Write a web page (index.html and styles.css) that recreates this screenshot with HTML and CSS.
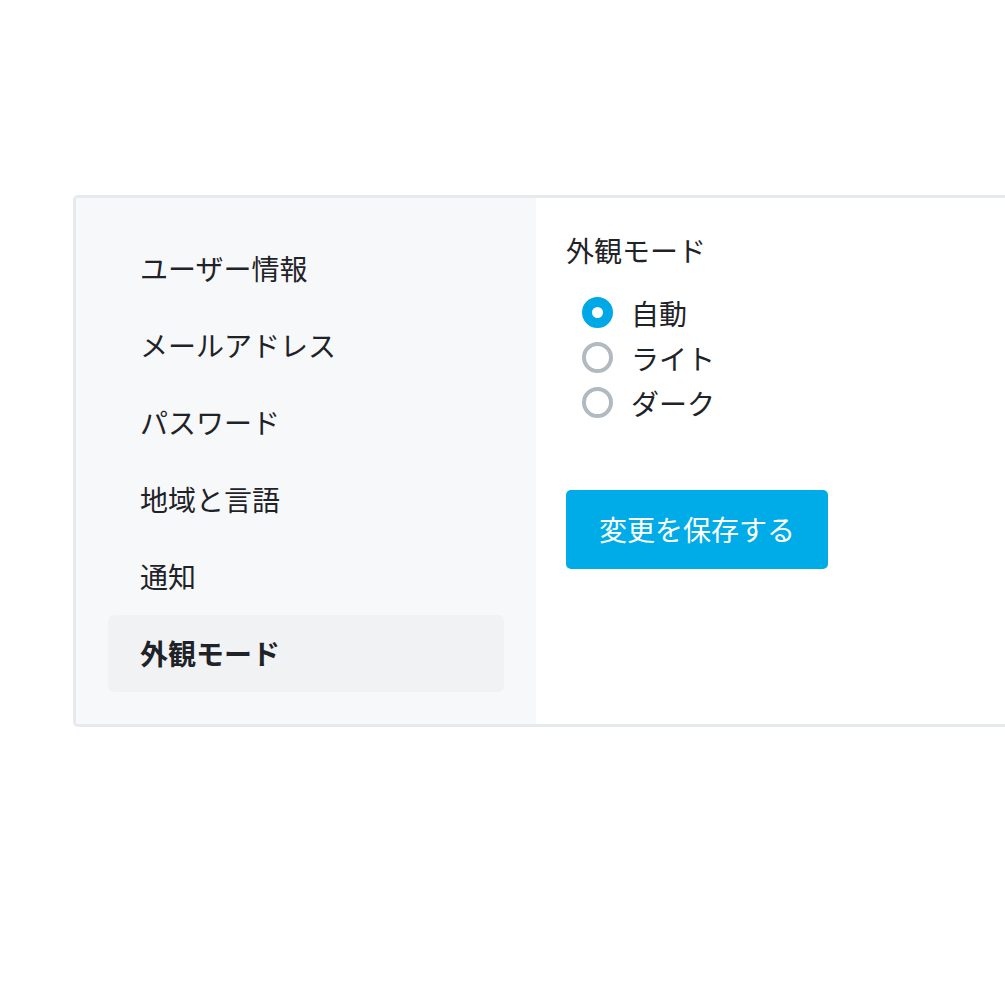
FILE: index.html
```html
<!DOCTYPE html>
<html lang="ja">
<head>
<meta charset="utf-8">
<title>設定</title>
<link rel="stylesheet" href="styles.css">
</head>
<body>
<div class="page">
  <div class="card">
    <nav class="sidebar">
      <a class="nav-item">ユーザー情報</a>
      <a class="nav-item">メールアドレス</a>
      <a class="nav-item">パスワード</a>
      <a class="nav-item">地域と言語</a>
      <a class="nav-item">通知</a>
      <a class="nav-item active">外観モード</a>
    </nav>
    <section class="content">
      <h2 class="title">外観モード</h2>
      <div class="radios">
        <label class="radio"><span class="dot checked"></span><span class="label">自動</span></label>
        <label class="radio"><span class="dot"></span><span class="label">ライト</span></label>
        <label class="radio"><span class="dot"></span><span class="label">ダーク</span></label>
      </div>
      <button class="save">変更を保存する</button>
    </section>
  </div>
</div>
</body>
</html>
```
FILE: styles.css
```css
html, body {
  margin: 0;
  padding: 0;
  background: #ffffff;
}
body {
  font-family: "Noto Sans CJK JP", "Noto Sans", sans-serif;
  color: #1f2328;
  overflow: hidden;
}
.page {
  padding: 195px 0 0 73px;
}
.card {
  display: flex;
  width: 1100px;
  border: 3px solid #e6e9ed;
  border-radius: 5px;
  overflow: hidden;
}
.sidebar {
  width: 460px;
  flex: none;
  box-sizing: border-box;
  padding: 32px;
  background: #f7f8fa;
  display: flex;
  flex-direction: column;
}
.nav-item {
  display: flex;
  align-items: center;
  height: 77px;
  padding: 0 32px 2px;
  box-sizing: border-box;
  font-size: 28px;
  line-height: 40px;
  color: #1f2328;
  border-radius: 6px;
}
.nav-item.active {
  background: #f1f2f4;
  font-weight: 700;
}
.content {
  flex: 1;
  padding: 30px 30px;
  background: #fff;
}
.title {
  margin: 0;
  font-size: 28px;
  font-weight: 400;
  line-height: 44px;
}
.radios {
  display: flex;
  flex-direction: column;
  margin-top: 18px;
  padding-left: 16px;
}
.radio {
  display: flex;
  align-items: center;
  height: 45px;
  font-size: 28px;
}
.dot {
  box-sizing: border-box;
  width: 31px;
  height: 31px;
  border-radius: 50%;
  border: 4px solid #b1b9c1;
  margin-right: 18px;
  background: #fff;
}
.dot.checked {
  border: 10px solid #00a9e6;
}
.save {
  margin-top: 65px;
  display: block;
  height: 79px;
  padding: 0 33px 2px;
  border: none;
  border-radius: 5px;
  background: #00ace8;
  color: #fff;
  font-family: inherit;
  font-size: 28px;
}
```
